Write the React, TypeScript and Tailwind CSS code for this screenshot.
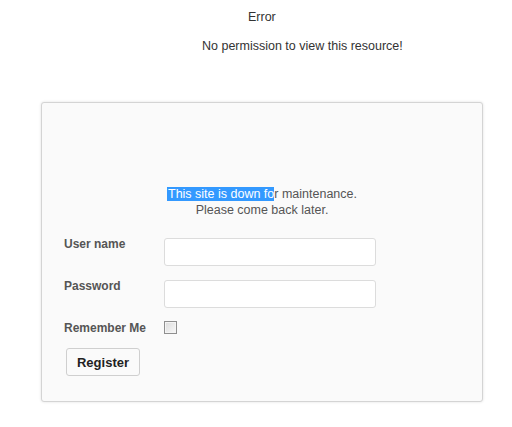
export default function App() {
	return (
		<div className="min-h-[427px] w-[512px] bg-white font-['Liberation_Sans',Arial,sans-serif] text-[12.5px] text-[#333]">
			<div className="pl-[248px] pt-[10px] leading-[14px]">Error</div>
			<div className="pl-[202px] pt-[15px] leading-[14px]">
				No permission to view this resource!
			</div>
			<section className="ml-[41px] mt-[49px] h-[300px] w-[442px] rounded-[3px] border border-[#d4d4d4] bg-[#fafafa] shadow-[0_0_3px_rgba(0,0,0,0.12)]">
				<div className="pt-[83px] text-center leading-[16px] text-[#555]">
					<p>
						<span className="bg-[#3399ff] pl-[1px] text-white">This site is down fo</span>r
						maintenance.
					</p>
					<p>Please come back later.</p>
				</div>
				<form className="mt-[20px] flex flex-col pl-[22px] text-[12px]">
					<div className="flex items-start">
						<label className="w-[100px] font-bold leading-[12px] text-[#555]">
							User name
						</label>
						<input
							className="h-[28px] w-[212px] rounded-[3px] border border-[#dcdcdc] bg-white"
							type="text"
						/>
					</div>
					<div className="mt-[14px] flex items-start">
						<label className="w-[100px] font-bold leading-[12px] text-[#555]">
							Password
						</label>
						<input
							className="h-[28px] w-[212px] rounded-[3px] border border-[#dcdcdc] bg-white"
							type="password"
						/>
					</div>
					<div className="mt-[13px] flex items-center">
						<label className="w-[100px] font-bold leading-[14px] text-[#555]">
							Remember Me
						</label>
						<span className="mt-[-1px] block h-[13px] w-[13px] border border-[#8f8f8f] bg-gradient-to-br from-[#dcdcdc] to-[#f8f8f8] shadow-[inset_0_0_0_1px_#f4f4f4]" />
					</div>
					<div className="mt-[13px] pl-[2px]">
						<button
							className="h-[28px] w-[74px] rounded-[3px] border border-[#cfcfcf] bg-[#fafafa] pt-[1px] text-[13px] font-bold text-[#222]"
							type="button"
						>
							Register
						</button>
					</div>
				</form>
			</section>
		</div>
	);
}
